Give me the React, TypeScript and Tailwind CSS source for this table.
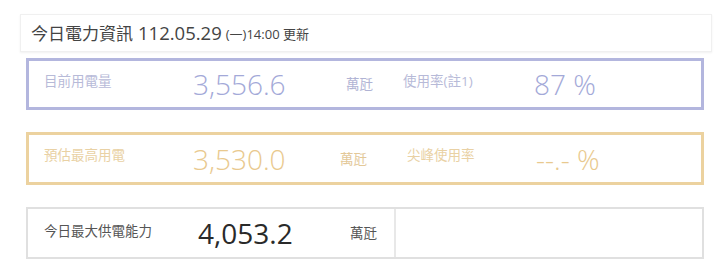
import React from "react";

const sans = { fontFamily: '"Open Sans", "Noto Sans CJK TC", sans-serif' };

export default function App() {
  return (
    <div
      className="w-[720px] h-[277px] bg-white pt-[14px] overflow-hidden"
      style={sans}
    >
      {/* header */}
      <div className="ml-[20px] w-[692px] h-[38px] border border-[#f0f0f0] shadow-[0_1px_2px_rgba(0,0,0,0.06)] flex items-center pl-[10px] text-[#444]">
        <span className="text-[17px] leading-none">今日電力資訊</span>
        <span className="text-[18.5px] leading-none ml-[5px]">112.05.29</span>
        <span className="text-[13px] leading-none ml-[4px] mt-[2px]">(一)14:00 更新</span>
      </div>

      {/* box 1 */}
      <div className="mt-[6px] ml-[26px] w-[678px] h-[52px] border-[3px] border-[#b3b6de] flex items-center">
        <div className="w-[164px] pl-[15px] text-[13.5px] text-[#b7bad8] mb-[6px]">目前用電量</div>
        <div className="w-[153px] text-[28px] font-light leading-none text-[#a3a9d8]">3,556.6</div>
        <div className="w-[57px] text-[13.5px] text-[#b0b3d4] mt-[1px]">萬瓩</div>
        <div className="w-[131px] text-[13.5px] text-[#b7bad8] mb-[6px]">使用率(註1)</div>
        <div className="text-[28px] font-light leading-none text-[#a3a9d8]">87 %</div>
      </div>

      {/* box 2 */}
      <div className="mt-[22px] ml-[26px] w-[678px] h-[53px] border-[3px] border-[#ecd29f] flex items-center">
        <div className="w-[164px] pl-[15px] text-[13.5px] text-[#e9d1a4] mb-[6px]">預估最高用電</div>
        <div className="w-[147px] text-[28px] font-light leading-none text-[#e9c98e]">3,530.0</div>
        <div className="w-[67px] text-[13.5px] text-[#e3c898] mt-[1px]">萬瓩</div>
        <div className="w-[129px] text-[13.5px] text-[#e9d1a4] mb-[6px]">尖峰使用率</div>
        <div className="text-[28px] font-light leading-none text-[#e9c98e]">--.- %</div>
      </div>

      {/* box 3 */}
      <div className="mt-[22px] ml-[26px] w-[678px] h-[52px] border-2 border-[#e0e0e0] flex">
        <div className="w-[368px] flex items-center border-r-2 border-[#e8e8e8]">
          <div className="w-[170px] pl-[16px] text-[13.5px] text-[#555] mb-[4px]">今日最大供電能力</div>
          <div className="w-[152px] text-[28px] font-normal leading-none text-[#2a2a2a]">4,053.2</div>
          <div className="text-[13.5px] text-[#555]">萬瓩</div>
        </div>
        <div className="flex-1" />
      </div>
    </div>
  );
}
